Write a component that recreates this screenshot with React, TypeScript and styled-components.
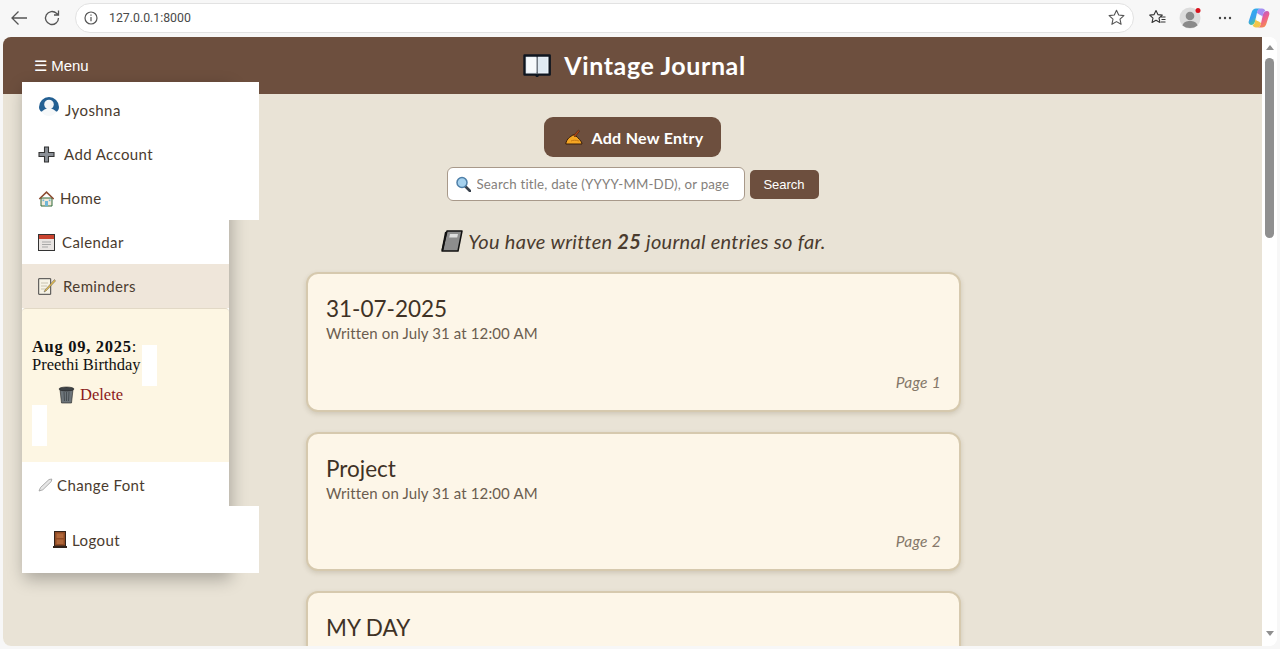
import React from "react"
import styled, { createGlobalStyle } from 'styled-components'

const HAND = `"Comic Sans MS", Lato, "Noto Sans", sans-serif`
const BROWN = '#6d4f3e'

const GlobalStyle = createGlobalStyle`
    html, body {
        margin: 0;
        height: 649px;
        overflow: hidden;
        background: #f7f7f7;
    }
    * { box-sizing: border-box; }
`

const Shell = styled.div`
    display: flex;
    flex-direction: column;
    height: 649px;
    background: #f7f7f7;
`

const Toolbar = styled.div`
    display: flex;
    align-items: center;
    height: 37px;
    flex: none;
    padding: 0 4px 2px 8px;
`

const ToolIcon = styled.div<{ $w?: number }>`
    width: ${({ $w }) => $w ?? 34}px;
    height: 28px;
    flex: none;
    display: flex;
    align-items: center;
    justify-content: center;
    position: relative;
`

const AddressBar = styled.div`
    flex: 1;
    height: 30px;
    margin: 0 6px 0 1px;
    padding: 0 8px;
    display: flex;
    align-items: center;
    gap: 11px;
    background: #fff;
    border: 1.5px solid #e2e2e2;
    border-radius: 15px;
`

const Url = styled.span`
    flex: 1;
    font: 12.3px Roboto, sans-serif;
    color: #4a4a4a;
`

const Viewport = styled.div`
    flex: 1;
    display: flex;
    margin: 0 3px 3px 3px;
    min-height: 0;
    background: #fff;
    border-radius: 8px;
    overflow: hidden;
`

const Page = styled.div`
    position: relative;
    flex: 1;
    min-width: 0;
    background: #e9e3d6;
    overflow: hidden;
`

const Scrollbar = styled.div`
    width: 15px;
    flex: none;
    display: flex;
    flex-direction: column;
    align-items: center;
    padding-top: 8px;
    background: #fff;
`

const Thumb = styled.div`
    width: 9px;
    height: 180px;
    margin-top: 8px;
    background: #8f8f8f;
    border-radius: 5px;
`

const Arrow = styled.div<{ $down?: boolean }>`
    width: 0;
    height: 0;
    border-left: 4.5px solid transparent;
    border-right: 4.5px solid transparent;
    ${({ $down }) => $down
        ? 'border-top: 5px solid #8f8f8f; margin-top: auto; margin-bottom: 10px;'
        : 'border-bottom: 5px solid #8f8f8f;'}
`

const Header = styled.header`
    display: grid;
    grid-template-columns: 1fr auto 1fr;
    align-items: center;
    height: 57px;
    padding: 0 27px 2px 31px;
    background: ${BROWN};
    color: #fff;
`

const MenuButton = styled.div`
    font: 15px "Liberation Sans", sans-serif;
    padding-top: 3px;
`

const Title = styled.h1`
    margin: 0;
    display: flex;
    align-items: center;
    gap: 13px;
    font: 700 25px ${HAND};
    letter-spacing: 0.6px;
    color: #fff;
`

const Content = styled.main`
    display: flex;
    flex-direction: column;
    align-items: center;
    padding-top: 23px;
`

const AddButton = styled.div`
    display: flex;
    align-items: center;
    justify-content: center;
    gap: 8px;
    width: 177px;
    height: 40px;
    padding-left: 4px;
    background: ${BROWN};
    border-radius: 9px;
    color: #fff;
    font: 700 16px ${HAND};
    letter-spacing: 0.3px;
`

const SearchRow = styled.form`
    display: flex;
    align-items: center;
    gap: 5px;
    margin-top: 10px;
`

const SearchField = styled.div`
    display: flex;
    align-items: center;
    gap: 6px;
    width: 298px;
    height: 34px;
    padding: 0 8px;
    background: #fff;
    border: 1px solid #a8998a;
    border-radius: 6px;
`

const SearchInput = styled.input`
    flex: 1;
    min-width: 0;
    border: 0;
    outline: 0;
    padding: 0;
    background: transparent;
    font: 13.3px ${HAND};
    letter-spacing: 0.2px;
    &::placeholder { color: #84807b; opacity: 1; }
`

const SearchButton = styled.div`
    width: 69px;
    height: 29px;
    display: flex;
    align-items: center;
    justify-content: center;
    background: ${BROWN};
    border-radius: 5px;
    color: #fff;
    font: 13px "Liberation Sans", sans-serif;
`

const Count = styled.p`
    display: flex;
    align-items: center;
    gap: 5px;
    height: 26px;
    margin: 27px 0 18px;
    padding-left: 2px;
    font: italic 20px ${HAND};
    letter-spacing: 0.28px;
    color: #4a3b2e;

    b { font-weight: 700; }
`

const CardList = styled.div`
    display: flex;
    flex-direction: column;
    gap: 20px;
    width: 655px;
    margin-left: 2px;
`

const Card = styled.article`
    display: flex;
    flex-direction: column;
    flex: none;
    height: 139.5px;
    padding: 19px 18px 18px;
    background: #fdf6e8;
    border: 2px solid #d6c9ae;
    border-radius: 12px;
    box-shadow: 0 2px 5px rgba(90, 70, 40, 0.18);
`

const CardTitle = styled.h2`
    margin: 0;
    font: 400 22.5px/31px ${HAND};
    color: #3f3226;
`

const CardMeta = styled.div`
    font: 15px/18px ${HAND};
    letter-spacing: 0.12px;
    color: #6b5d4f;
`

const CardPage = styled.div`
    margin-top: auto;
    text-align: right;
    font: italic 15.5px/20px ${HAND};
    letter-spacing: 0.3px;
    color: #85786a;
`

const Sidebar = styled.nav`
    position: absolute;
    left: 19px;
    top: 45px;
    width: 207px;
    display: flex;
    flex-direction: column;
    background: #fff;
    box-shadow: 2px 6px 16px rgba(0, 0, 0, 0.28);
`

const Row = styled.div<{ $wide?: boolean; $active?: boolean; $h?: number; $indent?: number; $gap?: number; $top?: number }>`
    display: flex;
    align-items: center;
    gap: ${({ $gap }) => $gap ?? 5}px;
    flex: none;
    width: ${({ $wide }) => ($wide ? 237 : 207)}px;
    height: ${({ $h }) => $h ?? 44}px;
    padding: ${({ $top }) => $top ?? 0}px 0 0 ${({ $indent }) => $indent ?? 16}px;
    background: ${({ $active }) => ($active ? '#efe6da' : '#fff')};
    font: 15px ${HAND};
    letter-spacing: 0.4px;
    color: #4a3b2e;
`

const ReminderPanel = styled.div`
    position: relative;
    height: 154px;
    padding: 29px 10px 0;
    background: #fdf6e3;
    border-top: 1px solid #e2d9c6;
    border-radius: 4px 4px 0 0;
    font: 16.5px/18px "Liberation Serif", serif;
    color: #111;
`

const ReminderText = styled.div`
    b { font: 700 16.5px/18px "Liberation Serif", serif; letter-spacing: 0.7px; }
`

const DeleteLink = styled.div`
    display: flex;
    align-items: center;
    gap: 5px;
    margin: 12px 0 0 26px;
    color: #8b1a1a;
`

const Stripe = styled.span<{ $left: number; $top: number }>`
    position: absolute;
    left: ${({ $left }) => $left}px;
    top: ${({ $top }) => $top}px;
    width: 15px;
    height: 41px;
    background: #fff;
`

/* drawings: browser chrome */
const BackIcon = () => (
    <svg width="18" height="16" viewBox="0 0 18 16" fill="none" stroke="#555" strokeWidth="1.3">
        <path d="M17 8H2M8.5 1.5 2 8l6.5 6.5" />
    </svg>
)
const ReloadIcon = () => (
    <svg width="18" height="18" viewBox="0 0 18 18" fill="none" stroke="#555" strokeWidth="1.3">
        <path d="M15.5 9a6.5 6.5 0 1 1-2-4.7L15.5 6M15.5 1.5V6H11" />
    </svg>
)
const InfoIcon = () => (
    <svg width="14" height="14" viewBox="0 0 14 14" fill="none" stroke="#555" strokeWidth="1.2">
        <circle cx="7" cy="7" r="6" />
        <path d="M7 6v4.2M7 3.6v1.2" />
    </svg>
)
const StarIcon = () => (
    <svg width="17" height="17" viewBox="0 0 17 17" fill="none" stroke="#555" strokeWidth="1.1" strokeLinejoin="round">
        <path d="M8.5 1.2l2.2 4.8 5.2.6-3.9 3.5 1.1 5.2-4.6-2.700-4.600 2.700 1.100-5.200L1.100 6.600l5.200-.6z" />
    </svg>
)
const FavoritesIcon = () => (
    <svg width="17" height="17" viewBox="0 0 17 17" fill="none" stroke="#333" strokeWidth="1.1" strokeLinejoin="round">
        <path d="M7 1.5 8.900 5.600l4.400.5-3.300 3 1 4.400L7 11.200l-4 2.300 1-4.400-3.300-3 4.400-.5zM12 8h4.500M12.500 10.500h4M12 13h4.500" />
    </svg>
)
const ProfileIcon = () => (
    <svg width="24" height="24" viewBox="0 0 24 24">
        <circle cx="11" cy="12" r="10.500" fill="#dcdcdc" />
        <circle cx="11" cy="10" r="4.300" fill="#8a8a8a" />
        <path d="M3.500 19.500c1-3.500 4-4.500 7.500-4.500s6.500 1 7.500 4.500c-2 1.700-4.500 2.500-7.500 2.500s-5.500-.8-7.500-2.500z" fill="#8a8a8a" />
        <circle cx="19" cy="4.500" r="2.500" fill="#d9141e" />
    </svg>
)
const DotsIcon = () => (
    <svg width="14" height="4" viewBox="0 0 14 4" fill="#444">
        <circle cx="2" cy="2" r="1.200" /><circle cx="7" cy="2" r="1.200" /><circle cx="12" cy="2" r="1.200" />
    </svg>
)
const CopilotIcon = () => (
    <svg width="22" height="22" viewBox="0 0 22 22" fill="none">
        <defs>
            <linearGradient id="copA" x1="0" y1="0" x2="0.6" y2="1">
                <stop offset="0" stopColor="#2fb6e8" />
                <stop offset="0.55" stopColor="#3aa0f0" />
                <stop offset="1" stopColor="#4fd07a" />
            </linearGradient>
            <linearGradient id="copB" x1="0.2" y1="0" x2="0.8" y2="1">
                <stop offset="0" stopColor="#a05be8" />
                <stop offset="0.5" stopColor="#ee5f8f" />
                <stop offset="1" stopColor="#f59a3d" />
            </linearGradient>
        </defs>
        <path d="M8 1.500h5c-2 0-3.200 1.300-3.800 3.300L7 14.500c-.5 2.200-1.800 3.500-4 3.500-1.700 0-2.800-1.700-2.300-3.400L3.800 4.800C4.400 2.800 6 1.500 8 1.500z" fill="url(#copA)" />
        <path d="M14 20.500H9c2 0 3.200-1.300 3.800-3.300l2.200-9.700c.5-2.200 1.800-3.500 4-3.500 1.700 0 2.800 1.700 2.300 3.400l-3.100 9.800c-.6 2-2.200 3.300-4.200 3.300z" fill="url(#copB)" />
        <path d="M9.200 4.800C9.800 2.800 11 1.500 13 1.500h1c1.800 0 3 1 3.300 2.500-1.200.3-2 1.500-2.300 3.500l-.5 2L9 6z" fill="#8a6cf0" opacity="0.75" />
        <path d="M12.800 17.200c-.6 2-1.800 3.300-3.800 3.300H8c-1.800 0-3-1-3.300-2.500 1.200-.3 2-1.500 2.300-3.500l.5-2L13 16z" fill="#f2c64a" />
        <path d="M9.500 8.500h4L12.500 14h-4z" fill="#fff" opacity="0.85" />
    </svg>
)

/* drawings: page emoji */
const BookIcon = () => (
    <svg width="28" height="25" viewBox="0 0 28 25">
        <path d="M1.500 3.500h25.200V22.600H15.400l-1.300 1.600-1.300-1.600H1.500z" fill="#eaf1f8" stroke="#0f1620" strokeWidth="2.400" strokeLinejoin="round" />
        <path d="M14.100 4v18" stroke="#0f1620" strokeWidth="1" />
        <path d="M4 5.500h9.300v14.700H4z" fill="#f6f9fc" />
        <path d="M14.900 5.500H24v14.700h-9.100z" fill="#dfe9f2" />
    </svg>
)
const HandIcon = () => (
    <svg width="18" height="16" viewBox="0 0 18 16">
        <path d="M.8 15c.2-2.500 1.500-4.700 3.500-6.500L8.500 5.500c2.500 1.200 5.500 4 8 7.500l.5 2z" fill="#f5a623" stroke="#3a1e0a" strokeWidth="1" strokeLinejoin="round" />
        <path d="M8.500 6.500 13.500 1l1.200 1-4.700 6z" fill="#a8431a" stroke="#3a1e0a" strokeWidth=".5" />
        <path d="M6 12c2-1 5-1 8 0" stroke="#c97a14" fill="none" />
    </svg>
)
const LensIcon = () => (
    <svg width="15" height="16" viewBox="0 0 15 16">
        <path d="M9.500 10.500 14 15" stroke="#39424d" strokeWidth="2.600" strokeLinecap="round" />
        <circle cx="6" cy="6.500" r="5" fill="#a5d1ee" stroke="#4e7fa8" strokeWidth="1.500" />
    </svg>
)
const NotebookIcon = () => (
    <svg width="22" height="22" viewBox="0 0 22 22">
        <path d="M6 1h15l-4 20H1z" fill="#8d8d8d" stroke="#111" strokeWidth="1.500" strokeLinejoin="round" />
        <path d="M9 4h8l-.8 3.500h-8z" fill="#dedede" />
        <path d="M5 2 1.500 20" stroke="#111" strokeWidth="2" />
    </svg>
)
const UserIcon = () => (
    <svg width="22" height="24" viewBox="0 0 22 24" style={{ alignSelf: 'flex-start', marginTop: 7 }}>
        <path d="M1 12a10 10 0 0 1 20 0c0 2-1 3.500-2 4.500L11 18l-8-1.500C2 15.500 1 14 1 12z" fill="#235f92" />
        <circle cx="11" cy="9.500" r="4.800" fill="#f2f4f6" />
        <path d="M3.500 17c2-2.500 4.500-3.500 7.500-3.500s5.500 1 7.500 3.500c-1.800 2.500-4.500 4-7.500 4s-5.700-1.500-7.500-4z" fill="#f6f8f9" />
    </svg>
)
const PlusIcon = () => (
    <svg width="17" height="17" viewBox="0 0 17 17">
        <path d="M6.500 1h4v5.500H16v4h-5.500V16h-4v-5.500H1v-4h5.500z" fill="#8a8f96" stroke="#333" strokeWidth="1.100" />
    </svg>
)
const HomeIcon = () => (
    <svg width="17" height="17" viewBox="0 0 17 17">
        <path d="M3 8h11v8H3z" fill="#f3e9d8" stroke="#2f6b3a" strokeWidth="1" />
        <path d="M8.500 1 .8 8.500l1 1 6.700-6.300 6.700 6.300 1-1z" fill="#8c4a2f" />
        <rect x="7" y="11" width="3" height="5" fill="#6fb7d8" />
        <rect x="4.500" y="9.500" width="1.700" height="1.700" fill="#6fb7d8" />
        <rect x="10.800" y="9.500" width="1.700" height="1.700" fill="#6fb7d8" />
    </svg>
)
const CalendarIcon = () => (
    <svg width="17" height="17" viewBox="0 0 17 17">
        <rect x="0.500" y="0.500" width="16" height="16" fill="#e8e4e2" stroke="#333" />
        <rect x="1" y="1" width="15" height="4" fill="#c9432f" />
        <path d="M4 8h9M4 10.500h9M4 13h6" stroke="#a7a7a7" />
    </svg>
)
const MemoIcon = () => (
    <svg width="18" height="17" viewBox="0 0 18 17">
        <path d="M.7.700h12v15.600h-12z" fill="#f7f3e6" stroke="#444" />
        <path d="M3 5h7M3 8h6M3 11h5" stroke="#c9c3b0" />
        <path d="M16.500 1.500 7 12l-1 2 2-1L17.500 3z" fill="#e9bf4e" stroke="#555" strokeWidth=".5" />
    </svg>
)
const PenIcon = () => (
    <svg width="15" height="14" viewBox="0 0 15 14" fill="#e6e6e6" stroke="#999" strokeWidth="0.800">
        <path d="M1 13l1.500-3.500L11 1.500 13.800 1l-.5 2.500-8.500 8.300z" />
    </svg>
)
const TrashIcon = () => (
    <svg width="17" height="18" viewBox="0 0 17 18">
        <path d="M2 3.500h13L13.500 17h-10z" fill="#6c7479" stroke="#222" strokeWidth=".6" />
        <ellipse cx="8.500" cy="3" rx="7.500" ry="2" fill="#3d4246" stroke="#222" strokeWidth=".6" />
        <path d="M6 6l.5 9M8.500 6v9M11 6l-.5 9" stroke="#484e52" />
    </svg>
)
const DoorIcon = () => (
    <svg width="14" height="17" viewBox="0 0 14 17">
        <rect x="1.500" y="0.500" width="11" height="14.500" fill="#8f4a24" stroke="#33241c" />
        <rect x="3.500" y="2.500" width="7" height="4.500" fill="#b1683b" />
        <rect x="3.500" y="8.500" width="7" height="4.500" fill="#b1683b" />
        <rect x="0" y="15" width="14" height="2" fill="#33241c" />
    </svg>
)

// third card runs off the bottom of the window, only its title is in view
const entries = [
    { title: '31-07-2025', meta: 'Written on July 31 at 12:00 AM', page: 'Page 1' },
    { title: 'Project', meta: 'Written on July 31 at 12:00 AM', page: 'Page 2' },
    { title: 'MY DAY' },
]

export default function App() {
    return (
        <Shell>
            <GlobalStyle />
            <Toolbar>
                <ToolIcon $w={22}><BackIcon /></ToolIcon>
                <ToolIcon $w={44}><ReloadIcon /></ToolIcon>
                <AddressBar>
                    <InfoIcon />
                    <Url>127.0.0.1:8000</Url>
                    <StarIcon />
                </AddressBar>
                <ToolIcon><FavoritesIcon /></ToolIcon>
                <ToolIcon><ProfileIcon /></ToolIcon>
                <ToolIcon><DotsIcon /></ToolIcon>
                <ToolIcon><CopilotIcon /></ToolIcon>
            </Toolbar>

            <Viewport>
                <Page>
                    <Header>
                        <MenuButton>☰ Menu</MenuButton>
                        <Title><BookIcon />Vintage Journal</Title>
                    </Header>

                    <Content>
                        <AddButton><HandIcon />Add New Entry</AddButton>
                        <SearchRow>
                            <SearchField>
                                <LensIcon />
                                <SearchInput placeholder="Search title, date (YYYY-MM-DD), or page" />
                            </SearchField>
                            <SearchButton>Search</SearchButton>
                        </SearchRow>
                        <Count>
                            <NotebookIcon />
                            <span>You have written <b>25</b> journal entries so far.</span>
                        </Count>
                        <CardList>
                            {entries.map(entry => (
                                <Card key={entry.title}>
                                    <CardTitle>{entry.title}</CardTitle>
                                    {entry.meta && <CardMeta>{entry.meta}</CardMeta>}
                                    {entry.page && <CardPage>{entry.page}</CardPage>}
                                </Card>
                            ))}
                        </CardList>
                    </Content>

                    <Sidebar>
                        <Row $wide $h={50} $top={6}><UserIcon />Jyoshna</Row>
                        <Row $wide $gap={9}><PlusIcon />Add Account</Row>
                        <Row $wide><HomeIcon />Home</Row>
                        <Row $gap={7}><CalendarIcon />Calendar</Row>
                        <Row $active $gap={7}><MemoIcon />Reminders</Row>
                        <ReminderPanel>
                            <ReminderText>
                                <b>Aug 09, 2025</b>:<br />
                                Preethi Birthday
                            </ReminderText>
                            <DeleteLink><TrashIcon />Delete</DeleteLink>
                            <Stripe $left={120} $top={36} />
                            <Stripe $left={10} $top={96} />
                        </ReminderPanel>
                        <Row $gap={4} $top={2}><PenIcon />Change Font</Row>
                        <Row $wide $h={67} $indent={31}><DoorIcon />Logout</Row>
                    </Sidebar>
                </Page>
                <Scrollbar>
                    <Arrow />
                    <Thumb />
                    <Arrow $down />
                </Scrollbar>
            </Viewport>
        </Shell>
    )
}
